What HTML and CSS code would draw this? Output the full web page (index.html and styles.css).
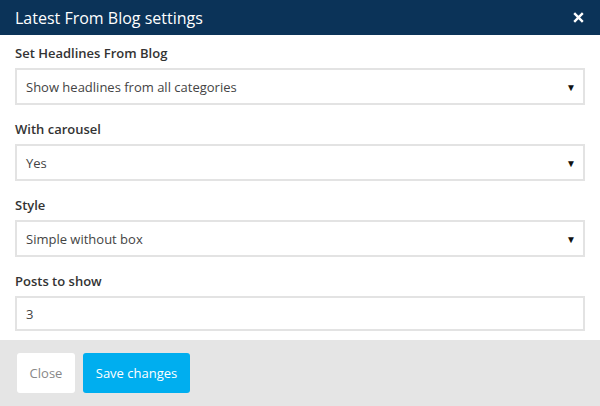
FILE: index.html
```html
<!DOCTYPE html>
<html>
<head>
<meta charset="utf-8">
<link rel="stylesheet" href="styles.css">
</head>
<body>
<div class="modal">
  <div class="modal-header">
    <h1 class="modal-title">Latest From Blog settings</h1>
    <button class="modal-close" aria-label="Close">
      <svg width="11" height="11" viewBox="0 0 11 11"><path d="M1.2 1.2 L9.8 9.8 M9.8 1.2 L1.2 9.8" stroke="#fff" stroke-width="2.4" fill="none"/></svg>
    </button>
  </div>
  <div class="modal-body">
    <div class="field">
      <label class="field-label">Set Headlines From Blog</label>
      <div class="select"><span>Show headlines from all categories</span><span class="caret">&#9660;</span></div>
    </div>
    <div class="field">
      <label class="field-label">With carousel</label>
      <div class="select"><span>Yes</span><span class="caret">&#9660;</span></div>
    </div>
    <div class="field">
      <label class="field-label">Style</label>
      <div class="select"><span>Simple without box</span><span class="caret">&#9660;</span></div>
    </div>
    <div class="field">
      <label class="field-label">Posts to show</label>
      <div class="input">3</div>
    </div>
  </div>
  <div class="modal-footer">
    <button class="btn btn-default">Close</button>
    <button class="btn btn-primary">Save changes</button>
  </div>
</div>
</body>
</html>
```
FILE: styles.css
```css
* { box-sizing: border-box; }
html, body { margin: 0; padding: 0; }
body {
  width: 600px;
  height: 406px;
  overflow: hidden;
  background: #fff;
  font-family: "Open Sans", "Noto Sans", sans-serif;
  color: #333;
}
.modal { display: flex; flex-direction: column; height: 406px; }
.modal-header {
  height: 35px;
  background: #0b3358;
  display: flex;
  align-items: center;
  justify-content: space-between;
  padding: 0 16px 0 15px;
}
.modal-title {
  margin: 0;
  font-size: 16px;
  font-weight: 400;
  color: #fff;
  line-height: 20px;
}
.modal-close {
  background: none;
  border: 0;
  padding: 0;
  width: 11px;
  height: 11px;
  display: flex;
}
.modal-body {
  padding: 9px 15px 9px 15px;
  display: flex;
  flex-direction: column;
  gap: 15px;
}
.field { display: flex; flex-direction: column; }
.field-label {
  font-size: 13px;
  font-weight: 600;
  color: #333;
  line-height: 18px;
  height: 24px;
}
.select, .input {
  height: 37px;
  border: 2px solid #e3e3e3;
  background: #fff;
  display: flex;
  align-items: center;
  justify-content: space-between;
  padding: 0 7px 0 9px;
  font-size: 13px;
  color: #444;
}
.input { height: 35px; }
.caret { font-size: 10px; color: #111; }
.modal-footer {
  margin-top: auto;
  height: 66px;
  background: #e5e5e5;
  display: flex;
  align-items: center;
  gap: 8px;
  padding: 0 17px;
}
.btn {
  height: 40px;
  border: 0;
  border-radius: 3px;
  font-family: "Open Sans", "Noto Sans", sans-serif;
  font-size: 13px;
  padding: 0 13px;
}
.btn-default { background: #fff; color: #888; width: 58px; padding: 0; }
.btn-primary { background: #00aeef; color: #fff; width: 107px; padding: 0; }
```
